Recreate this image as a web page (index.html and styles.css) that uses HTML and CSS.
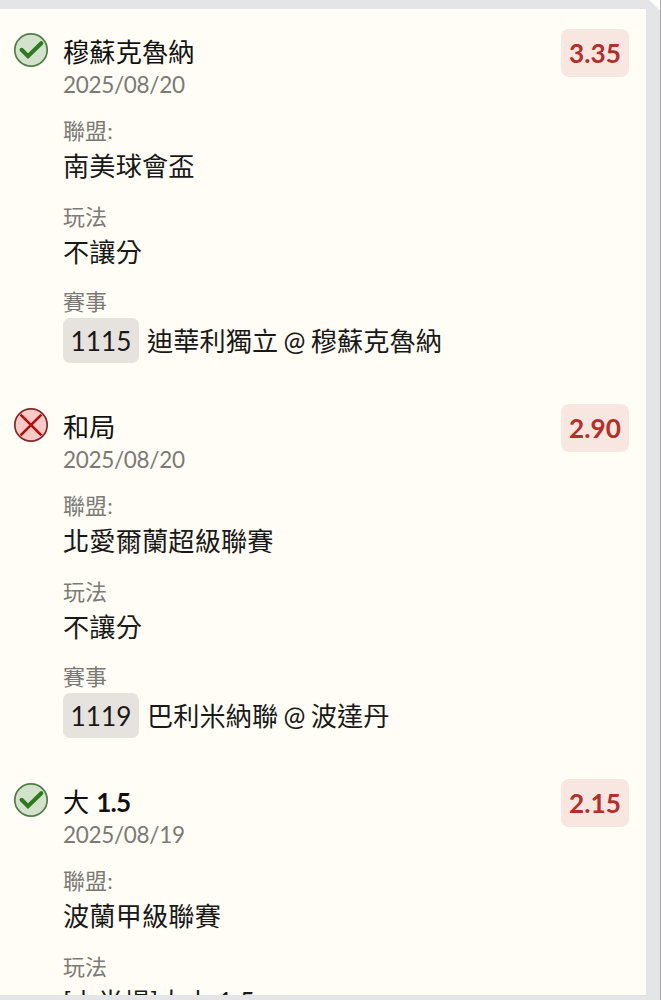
FILE: index.html
```
<!DOCTYPE html>
<html lang="zh-Hant">
<head>
<meta charset="utf-8">
<title>投注紀錄</title>
<link rel="stylesheet" href="styles.css">
</head>
<body>
<svg class="defs" aria-hidden="true">
  <symbol id="win" viewBox="0 0 36 36">
    <circle cx="18" cy="18" r="16.2" fill="#d3e3cb" stroke="#4f7d48" stroke-width="1.7"/>
    <path d="M8.6 17.8 15 24.2 28.3 11.2" fill="none" stroke="#2e7820" stroke-width="4.1" stroke-linecap="round"/>
  </symbol>
  <symbol id="lose" viewBox="0 0 36 36">
    <circle cx="18" cy="18" r="16.2" fill="#f8cbc8" stroke="#85272b" stroke-width="1.7"/>
    <path d="M7.6 7.6 28.4 28.4M28.4 7.6 7.6 28.4" fill="none" stroke="#b80d0d" stroke-width="2.7"/>
  </symbol>
</svg>
<main class="frame">
  <div class="panel">
    <article class="bet">
      <svg class="status"><use href="#win"/></svg>
      <div class="details">
        <h2 class="pick">穆蘇克魯納</h2>
        <p class="date">2025/08/20</p>
        <p class="label">聯盟:</p>
        <p class="value">南美球會盃</p>
        <p class="label">玩法</p>
        <p class="value">不讓分</p>
        <p class="label">賽事</p>
        <p class="match"><span class="code">1115</span><span class="teams">迪華利獨立 @ 穆蘇克魯納</span></p>
      </div>
      <strong class="odds">3.35</strong>
    </article>
    <article class="bet">
      <svg class="status"><use href="#lose"/></svg>
      <div class="details">
        <h2 class="pick">和局</h2>
        <p class="date">2025/08/20</p>
        <p class="label">聯盟:</p>
        <p class="value">北愛爾蘭超級聯賽</p>
        <p class="label">玩法</p>
        <p class="value">不讓分</p>
        <p class="label">賽事</p>
        <p class="match"><span class="code">1119</span><span class="teams">巴利米納聯 @ 波達丹</span></p>
      </div>
      <strong class="odds">2.90</strong>
    </article>
    <article class="bet">
      <svg class="status"><use href="#win"/></svg>
      <div class="details">
        <h2 class="pick">大 <b>1.5</b></h2>
        <p class="date">2025/08/19</p>
        <p class="label">聯盟:</p>
        <p class="value">波蘭甲級聯賽</p>
        <p class="label">玩法</p>
        <p class="value">[上半場]大小 1.5</p>
      </div>
      <strong class="odds">2.15</strong>
    </article>
  </div>
</main>
</body>
</html>
```
FILE: styles.css
```
* { box-sizing: border-box; }
body {
  margin: 0;
  font-family: Lato, "Noto Sans CJK TC", sans-serif;
  color: #191919;
  background: #e4e5e7;
}
.defs { display: block; width: 0; height: 0; }
.frame {
  height: 1000px;
  padding: 9px 14px 5px 0;
  border-right: 1px solid #a9a9ab;
  background: linear-gradient(45deg, transparent calc(100% - 8px), #fffef6 calc(100% - 7px)) #e4e5e7;
  overflow: hidden;
}
.panel {
  height: 986px;
  padding-top: 20px;
  background: #fffdf5;
  overflow: hidden;
}
.bet {
  display: flex;
  align-items: flex-start;
  height: 375px;
  padding: 0 17px 0 13px;
}
.status { flex: none; width: 36px; height: 36px; margin-top: 3px; }
.details { flex: 1; margin: 6px 0 0 14px; white-space: nowrap; }
.pick, .date, .label, .value, .match { margin: 0; }
.pick {
  height: 34px;
  font-size: 26.2px;
  font-weight: 400;
  line-height: 34px;
  letter-spacing: .15px;
  color: #111;
}
.pick b { letter-spacing: -.8px; }
.date, .label {
  height: 30px;
  font-size: 22px;
  line-height: 30px;
  color: #7b7a76;
}
.date { font-size: 22.5px; line-height: 32px; letter-spacing: -.3px; }
.label { margin-top: 17px; letter-spacing: .1px; }
.value {
  height: 38.6px;
  font-size: 26.2px;
  line-height: 41px;
  letter-spacing: .15px;
}
.match {
  display: flex;
  align-items: center;
  gap: 8px;
  height: 45px;
  margin-top: 1px;
  font-size: 26.2px;
  line-height: 45px;
}
.teams { padding-top: 1px; word-spacing: -1.4px; letter-spacing: .05px; }
.code {
  width: 76px;
  height: 45px;
  border-radius: 7px;
  line-height: 47px;
  text-align: center;
  background: #e6e3de;
}
.odds {
  flex: none;
  width: 68px;
  height: 48px;
  border-radius: 8px;
  font-size: 26.2px;
  line-height: 48px;
  text-align: center;
  color: #b3302a;
  background: #f8e7e1;
}
```
